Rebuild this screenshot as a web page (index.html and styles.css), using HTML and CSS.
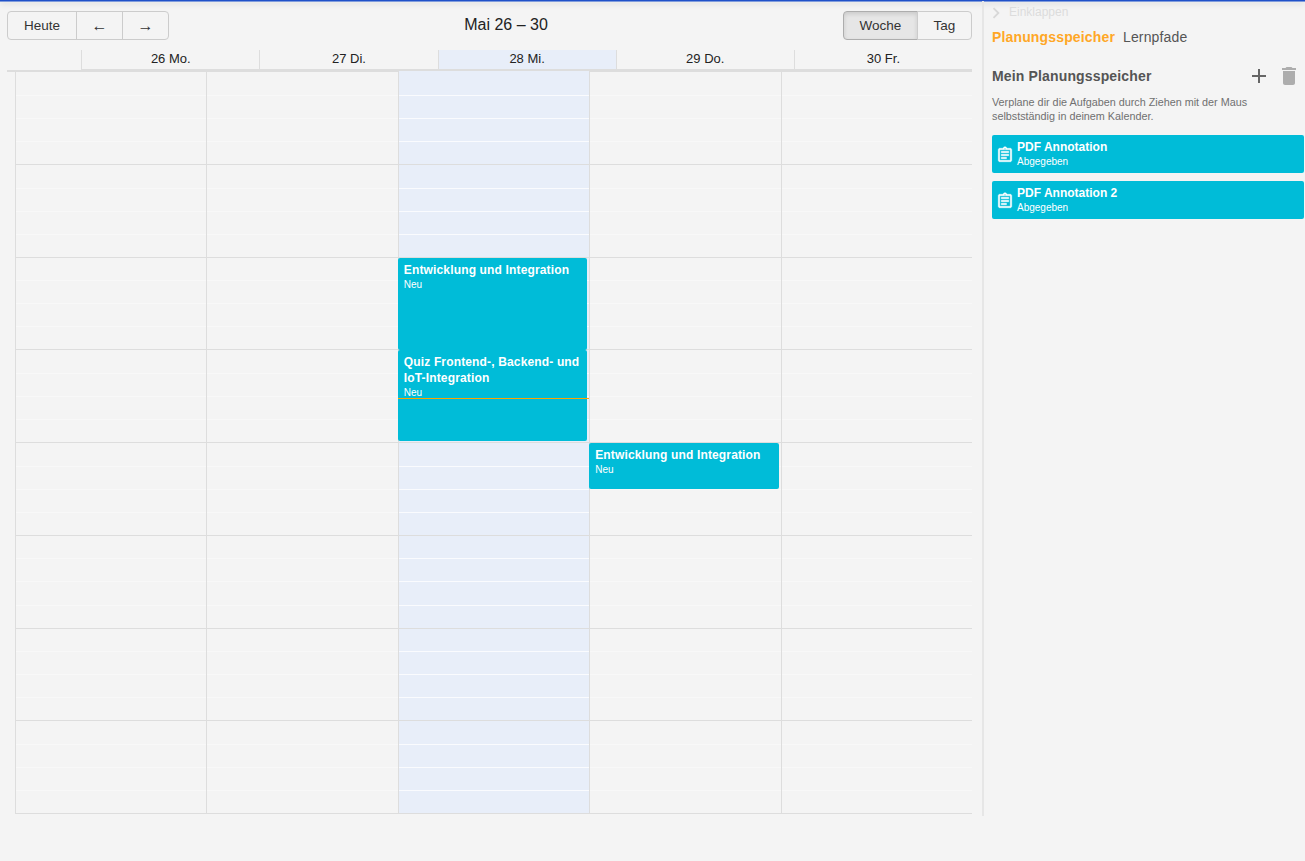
FILE: index.html
```html
<!DOCTYPE html>
<html lang="de">
<head>
<meta charset="utf-8">
<title>Kalender</title>
<link rel="stylesheet" href="styles.css">
</head>
<body>
<div class="topbar"></div>
<div class="app">
  <main class="calendar">
    <div class="toolbar">
      <div class="btn-group">
        <button class="btn btn-today">Heute</button>
        <button class="btn btn-arrow">←</button>
        <button class="btn btn-arrow">→</button>
      </div>
      <h2 class="title">Mai 26 – 30</h2>
      <div class="btn-group">
        <button class="btn btn-week active">Woche</button>
        <button class="btn btn-day">Tag</button>
      </div>
    </div>
    <div class="head">
      <div class="gutter"></div>
      <div class="day-head">26 Mo.</div>
      <div class="day-head">27 Di.</div>
      <div class="day-head today">28 Mi.</div>
      <div class="day-head">29 Do.</div>
      <div class="day-head">30 Fr.</div>
    </div>
    <div class="grid">
      <div class="col">
        <div class="hour"><i></i><i></i><i></i><i></i></div><div class="hour"><i></i><i></i><i></i><i></i></div><div class="hour"><i></i><i></i><i></i><i></i></div><div class="hour"><i></i><i></i><i></i><i></i></div>
        <div class="hour"><i></i><i></i><i></i><i></i></div><div class="hour"><i></i><i></i><i></i><i></i></div><div class="hour"><i></i><i></i><i></i><i></i></div><div class="hour"><i></i><i></i><i></i><i></i></div>
      </div>
      <div class="col">
        <div class="hour"><i></i><i></i><i></i><i></i></div><div class="hour"><i></i><i></i><i></i><i></i></div><div class="hour"><i></i><i></i><i></i><i></i></div><div class="hour"><i></i><i></i><i></i><i></i></div>
        <div class="hour"><i></i><i></i><i></i><i></i></div><div class="hour"><i></i><i></i><i></i><i></i></div><div class="hour"><i></i><i></i><i></i><i></i></div><div class="hour"><i></i><i></i><i></i><i></i></div>
      </div>
      <div class="col today">
        <div class="hour"><i></i><i></i><i></i><i></i></div><div class="hour"><i></i><i></i><i></i><i></i></div><div class="hour"><i></i><i></i><i></i><i></i></div><div class="hour"><i></i><i></i><i></i><i></i></div>
        <div class="hour"><i></i><i></i><i></i><i></i></div><div class="hour"><i></i><i></i><i></i><i></i></div><div class="hour"><i></i><i></i><i></i><i></i></div><div class="hour"><i></i><i></i><i></i><i></i></div>
        <div class="event ev-a"><div class="ev-title">Entwicklung und Integration</div><div class="ev-sub">Neu</div></div>
        <div class="event ev-b"><div class="ev-title">Quiz Frontend-, Backend- und IoT-Integration</div><div class="ev-sub">Neu</div></div>
        <div class="now"></div>
      </div>
      <div class="col">
        <div class="hour"><i></i><i></i><i></i><i></i></div><div class="hour"><i></i><i></i><i></i><i></i></div><div class="hour"><i></i><i></i><i></i><i></i></div><div class="hour"><i></i><i></i><i></i><i></i></div>
        <div class="hour"><i></i><i></i><i></i><i></i></div><div class="hour"><i></i><i></i><i></i><i></i></div><div class="hour"><i></i><i></i><i></i><i></i></div><div class="hour"><i></i><i></i><i></i><i></i></div>
        <div class="event ev-c"><div class="ev-title">Entwicklung und Integration</div><div class="ev-sub">Neu</div></div>
      </div>
      <div class="col">
        <div class="hour"><i></i><i></i><i></i><i></i></div><div class="hour"><i></i><i></i><i></i><i></i></div><div class="hour"><i></i><i></i><i></i><i></i></div><div class="hour"><i></i><i></i><i></i><i></i></div>
        <div class="hour"><i></i><i></i><i></i><i></i></div><div class="hour"><i></i><i></i><i></i><i></i></div><div class="hour"><i></i><i></i><i></i><i></i></div><div class="hour"><i></i><i></i><i></i><i></i></div>
      </div>
    </div>
  </main>
  <aside class="side">
    <div class="collapse">
      <svg class="chev" viewBox="0 0 24 24"><path d="M8.59 16.59 13.17 12 8.59 7.41 10 6l6 6-6 6z"/></svg>
      <span>Einklappen</span>
    </div>
    <div class="tabs">
      <span class="tab on">Planungsspeicher</span>
      <span class="tab">Lernpfade</span>
    </div>
    <div class="side-head">
      <h3>Mein Planungsspeicher</h3>
      <div class="tools">
        <svg class="tool plus" viewBox="0 0 24 24"><path d="M19 13h-6v6h-2v-6H5v-2h6V5h2v6h6v2z"/></svg>
        <svg class="tool trash" viewBox="0 0 24 24"><path d="M6 19c0 1.1.9 2 2 2h8c1.1 0 2-.9 2-2V7H6v12zM19 4h-3.5l-1-1h-5l-1 1H5v2h14V4z"/></svg>
      </div>
    </div>
    <p class="hint">Verplane dir die Aufgaben durch Ziehen mit der Maus selbstständig in deinem Kalender.</p>
    <div class="card">
      <svg class="card-icon" viewBox="0 0 24 24"><path d="M19 3h-4.18C14.4 1.84 13.3 1 12 1s-2.4.84-2.82 2H5c-1.1 0-2 .9-2 2v14c0 1.1.9 2 2 2h14c1.1 0 2-.9 2-2V5c0-1.1-.9-2-2-2zm-7 0c.55 0 1 .45 1 1s-.45 1-1 1-1-.45-1-1 .45-1 1-1zm7 16H5V5h14v14z"/><path d="M7 7h10v2H7zm0 4h10v2H7zm0 4h7v2H7z"/></svg>
      <div><div class="card-title">PDF Annotation</div><div class="ev-sub">Abgegeben</div></div>
    </div>
    <div class="card">
      <svg class="card-icon" viewBox="0 0 24 24"><path d="M19 3h-4.18C14.4 1.84 13.3 1 12 1s-2.4.84-2.82 2H5c-1.1 0-2 .9-2 2v14c0 1.1.9 2 2 2h14c1.1 0 2-.9 2-2V5c0-1.1-.9-2-2-2zm-7 0c.55 0 1 .45 1 1s-.45 1-1 1-1-.45-1-1 .45-1 1-1zm7 16H5V5h14v14z"/><path d="M7 7h10v2H7zm0 4h10v2H7zm0 4h7v2H7z"/></svg>
      <div><div class="card-title">PDF Annotation 2</div><div class="ev-sub">Abgegeben</div></div>
    </div>
  </aside>
</div>
</body>
</html>
```
FILE: styles.css
```css
* { box-sizing: border-box; }
html, body { margin: 0; height: 100%; }
body {
  background: #f4f4f4;
  font-family: "Liberation Sans", Arial, sans-serif;
  color: #222;
  overflow: hidden;
}
.topbar {
  height: 1px;
  background: #1f50c8;
  box-shadow: 0 1px 0 #7f9bdc, 0 2px 6px rgba(0, 0, 0, 0.35);
}
.app {
  display: flex;
  height: 815px;
}
.calendar {
  width: 982px;
  flex: none;
  padding: 10px 10px 0 7px;
}
.toolbar {
  display: flex;
  justify-content: space-between;
  align-items: flex-start;
  height: 39px;
}
.btn-group { display: flex; }
.btn {
  height: 29px;
  margin: 0 0 0 -1px;
  padding: 0;
  background: transparent;
  border: 1px solid #ccc;
  font: 13.5px "Liberation Sans", Arial, sans-serif;
  color: #333;
}
.btn-group .btn:first-child { margin-left: 0; border-radius: 4px 0 0 4px; }
.btn-group .btn:last-child { border-radius: 0 4px 4px 0; }
.btn-today { width: 70px; }
.btn-arrow { width: 47px; font-size: 16px; }
.btn-week { width: 75px; }
.btn-day { width: 55px; }
.btn.active {
  background: #e6e6e6;
  border-color: #adadad;
  box-shadow: inset 0 2px 4px rgba(0, 0, 0, 0.125);
}
.title {
  margin: 4px 0 0;
  font-size: 16px;
  font-weight: 400;
  line-height: 20px;
  color: #222;
}
.head {
  display: flex;
  height: 22px;
  align-items: flex-end;
}
.gutter {
  width: 74.2px;
  flex: none;
  height: 2px;
  background: #ddd;
}
.day-head {
  flex: 1 1 0;
  height: 22px;
  border-left: 1px solid #ddd;
  border-bottom: 3px solid #ddd;
  font-size: 13px;
  line-height: 18px;
  text-align: center;
  color: #222;
}
.day-head.today { background: #e8eef9; }
.grid {
  display: grid;
  grid-template-columns: repeat(5, 1fr);
  margin: -0.6px 0 0 8px;
  border-bottom: 1px solid #ddd;
}
.col {
  position: relative;
  border-left: 1px solid #ddd;
}
.col.today { background: #e8eef9; }
.hour { display: flex; flex-direction: column; }
.hour i {
  display: block;
  height: 23.03125px;
  border-top: 1px solid #f8f8f8;
}
.hour i:first-child { height: 23.59375px; }
.col.today .hour i { border-top-color: #fafbfe; }
.hour i:first-child, .col.today .hour i:first-child { border-top-color: #ddd; }
.hour:first-child i:first-child, .col.today .hour:first-child i:first-child { border-top-color: transparent; }
.event {
  position: absolute;
  left: -1px;
  right: 2px;
  padding: 4px 2px 4px 6px;
  background: #00bcd8;
  border-radius: 2px;
  color: #fff;
}
.ev-a { top: 186.6px; height: 92px; }
.ev-b { top: 278.6px; height: 91px; }
.ev-c { top: 371.6px; height: 46px; }
.ev-title {
  font-size: 12px;
  font-weight: 700;
  line-height: 16px;
  letter-spacing: 0.15px;
}
.ev-sub {
  font-size: 10px;
  line-height: 14px;
}
.now {
  position: absolute;
  left: -1px;
  right: 0;
  top: 326.6px;
  height: 1px;
  background: #ffa500;
}
.side {
  flex: 1;
  border-left: 2px solid #e6e6e6;
  padding: 0 0 0 8px;
  min-width: 0;
}
.collapse {
  display: flex;
  align-items: center;
  height: 22px;
  font-size: 12px;
  color: #dcdcdc;
}
.chev { width: 22px; height: 22px; margin: 2px 0 0 -7px; fill: #d8d8d8; flex: none; }
.collapse span { margin-left: 2px; }
.tabs {
  display: flex;
  gap: 8px;
  margin-top: 5px;
  font-size: 14px;
  line-height: 18px;
  color: #555;
  letter-spacing: 0.15px;
}
.tab.on { color: #ffa726; font-weight: 700; }
.side-head {
  display: flex;
  justify-content: space-between;
  align-items: center;
  margin-top: 15px;
  height: 30px;
}
.side-head h3 {
  margin: 0;
  font-size: 14px;
  font-weight: 700;
  color: #555;
  letter-spacing: 0.15px;
}
.tools { display: flex; gap: 6px; margin-right: 4px; }
.tool { width: 24px; height: 24px; }
.plus { fill: #666; }
.trash { fill: #adadad; }
.hint {
  max-width: 280px;
  margin: 4px 0 0;
  font-size: 10.8px;
  line-height: 14px;
  color: #707070;
}
.card {
  display: flex;
  align-items: center;
  gap: 3px;
  height: 38px;
  margin: 12px 1px 0 0;
  padding: 0 6px 1px 4px;
  background: #00bcd8;
  border-radius: 2px;
  color: #fff;
}
.card + .card { margin-top: 8px; }
.card-title {
  font-size: 12px;
  font-weight: 700;
  line-height: 16px;
}
.card-icon { width: 18px; height: 18px; fill: #fff; stroke: #fff; stroke-width: 0.5; flex: none; margin-top: 2px; }
```
